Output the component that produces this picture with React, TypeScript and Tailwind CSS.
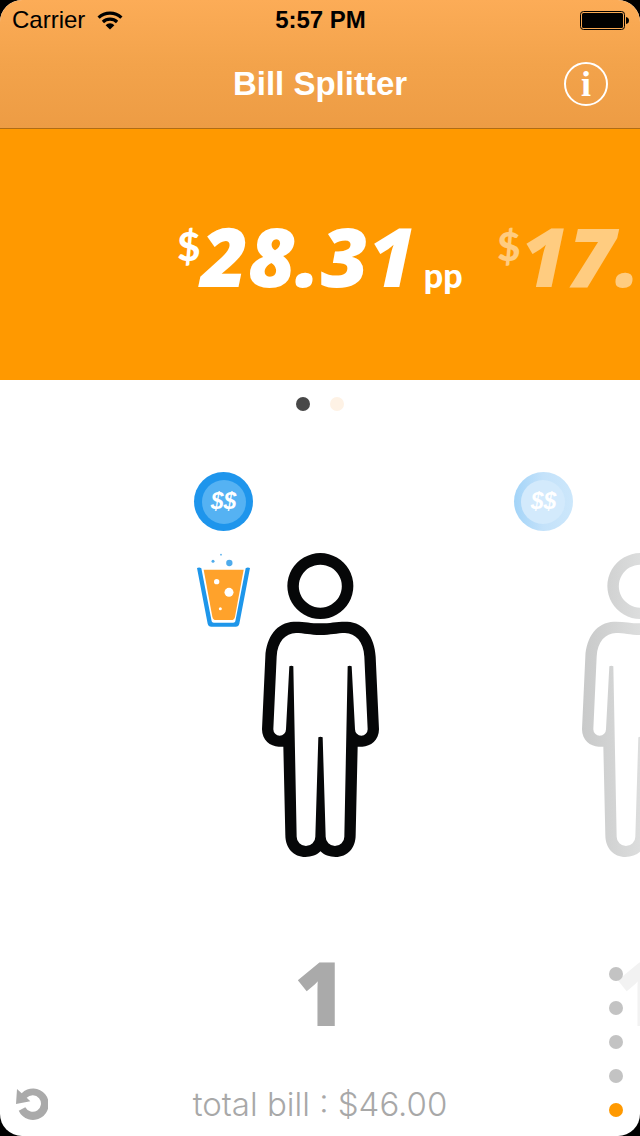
import React from "react";

type Option = {
  amount: string;
  people: number;
  drinks: boolean;
  active: boolean;
};

const options: Option[] = [
  { amount: "28.31", people: 1, drinks: true, active: true },
  { amount: "17.69", people: 1, drinks: false, active: false },
];

function WifiIcon() {
  return (
    <svg viewBox="0 0 26 19" className="h-[19px] w-[26px]" aria-hidden="true">
      <g fill="none" stroke="#000" strokeWidth="3.2">
        <path d="M1.6 6.6A16.5 16.5 0 0 1 24.4 6.6" />
        <path d="M5.9 11A10.3 10.3 0 0 1 20.1 11" />
      </g>
      <path d="M13 18.5L8.6 14.2A6.2 6.2 0 0 1 17.4 14.2Z" />
    </svg>
  );
}

function BatteryIcon() {
  return (
    <svg viewBox="0 0 49 19" className="h-[19px] w-[49px]" aria-hidden="true">
      <rect x="0.5" y="0.5" width="44" height="18" rx="3" fill="none" stroke="#000" />
      <rect x="2" y="2" width="41" height="15" rx="1.5" />
      <path d="M46 6Q49 6.5 49 9.5T46 13Z" />
    </svg>
  );
}

function PersonIcon({ active }: { active: boolean }) {
  return (
    <svg viewBox="35 39 351 912" className="h-[304px] w-[117px] shrink-0" aria-hidden="true">
      <defs>
        <linearGradient id="fade-person" gradientUnits="userSpaceOnUse" x1="35" y1="0" x2="386" y2="0">
          <stop offset="0" stopColor="#c8c9c9" />
          <stop offset="0.5" stopColor="#dcdddd" />
          <stop offset="1" stopColor="#eeeeee" />
        </linearGradient>
      </defs>
      <g fill={active ? "#060708" : "url(#fade-person)"} fillRule="evenodd">
        <path d="M210 39a99 99 0 1 0 .1 0ZM210 74a64.500 64.500 0 1 1-.1 0Z" />
        <path d="M210 250C180 250 160 244 130 245C80 247 48 290 45 350L35 568C35 600 60 620 85 620L99 620L105 885C105 925 130 951 165 951C183 951 200 945 210.500 934C221 945 238 951 256 951C291 951 316 925 316 885L322 620L336 620C361 620 386 600 386 568L376 350C373 290 341 247 291 245C261 244 241 250 210 250ZM210 285C180 285 160 279 137 279C105 280 81 305 79 350L69 568A19 19 0 0 0 107 568L117 379Q123 376 129 379L139 890A28 28 0 0 0 195 890L204 592Q210 588 217 592L226 890A28 28 0 0 0 282 890L292 379Q298 376 304 379L314 568A19 19 0 0 0 352 568L342 350C340 305 316 280 284 279C261 279 241 285 210 285Z" />
      </g>
    </svg>
  );
}

function DrinkIcon() {
  return (
    <svg viewBox="51 279 159 222" className="h-[74px] w-[53px]" aria-hidden="true">
      <path
        d="M51 324Q58 320 64 325L95 484Q96 488 101 488H160Q165 488 166 484L197 325Q203 320 210 324L178 491Q176 500 167 500H94Q85 500 83 491Z"
        fill="#1e96ea"
      />
      <path d="M71 329H191L165 470Q163 480 154 480H108Q99 480 97 470Z" fill="#ffa22b" />
      <g fill="#4fabeb">
        <circle cx="148" cy="309" r="9.5" />
        <circle cx="99" cy="304" r="4.500" />
        <circle cx="123" cy="284" r="2.500" />
      </g>
      <g fill="#fff">
        <circle cx="110" cy="365" r="8" />
        <circle cx="147" cy="397" r="13.500" />
        <circle cx="121" cy="446" r="4.500" />
      </g>
    </svg>
  );
}

function Coin({ active }: { active: boolean }) {
  const ring = active
    ? "bg-[#1e95ec]"
    : "bg-linear-to-r from-[#a3d4f8] via-[#c4e2fa] to-[#cce7fb]";
  const face = active ? "bg-[#55b2f3]" : "bg-[#d3eafc]";
  return (
    <span className={`flex size-[59px] items-center justify-center rounded-full ${ring}`}>
      <span
        className={`flex size-11 items-center justify-center rounded-full font-['Liberation_Sans'] text-[23px] leading-none font-bold text-white italic ${face}`}
      >
        $$
      </span>
    </span>
  );
}

function Amount({ option }: { option: Option }) {
  return (
    <div
      className={`flex w-2/3 shrink-0 items-start justify-center font-['Open_Sans',sans-serif] leading-none font-extrabold text-white ${
        option.active ? "" : "opacity-50"
      }`}
    >
      <span className="pt-3 font-['Lato',sans-serif] text-[40px] font-black">$</span>
      <span className="text-[82px] italic">{option.amount}</span>
      <span className="self-end pb-1 pl-2 font-['Lato',sans-serif] text-[34px] font-black">pp</span>
    </div>
  );
}

export default function App() {
  return (
    <div className="min-h-screen bg-black">
      <div className="relative flex min-h-screen flex-col overflow-hidden rounded-[22px] bg-white font-['Liberation_Sans',Arial,sans-serif]">
        <header className="border-b border-[#b06c14] bg-linear-to-b from-[#fcac57] via-[#f3a34b] to-[#ed9c44]">
          <div className="grid h-10 grid-cols-[1fr_auto_1fr] items-center pr-[11px] pl-3 text-2xl text-black">
            <div className="flex items-center gap-3">
              <span>Carrier</span>
              <WifiIcon />
            </div>
            <span className="font-bold">5:57 PM</span>
            <div className="flex justify-end">
              <BatteryIcon />
            </div>
          </div>
          <div className="grid h-22 grid-cols-[1fr_auto_1fr] items-center px-8">
            <h1 className="col-start-2 text-[33px] font-bold text-white">Bill Splitter</h1>
            <button
              type="button"
              aria-label="Information"
              className="flex size-11 items-center justify-center justify-self-end rounded-full border-2 border-white font-['Liberation_Serif',serif] text-4xl leading-none font-bold text-white"
            >
              i
            </button>
          </div>
        </header>

        <section className="flex h-[251px] items-center overflow-hidden bg-[#ff9900] pl-[25%]">
          {options.map((o) => (
            <Amount key={o.amount} option={o} />
          ))}
        </section>

        <main className="flex grow flex-col">
          <div className="flex justify-center gap-5 pt-[17px]">
            <span className="size-3.5 rounded-full bg-[#484848]" />
            <span className="size-3.5 rounded-full bg-[#fef2e5]" />
          </div>

          <div className="mt-[61px] flex overflow-hidden pl-[25%]">
            {options.map((o) => (
              <div key={o.amount} className="flex w-2/3 shrink-0 flex-col items-center">
                <div className="flex items-end gap-2 pr-[101px] pl-[34px]">
                  <div className="flex h-[385px] w-[60px] flex-col gap-[22px]">
                    <Coin active={o.active} />
                    {o.drinks && (
                      <div className="pl-[3px]">
                        <DrinkIcon />
                      </div>
                    )}
                  </div>
                  <PersonIcon active={o.active} />
                </div>
                <span
                  className={`mt-[75px] font-['Open_Sans',sans-serif] text-[88px] leading-[120px] font-extrabold ${
                    o.active ? "text-[#aaaaaa]" : "text-[#f2f2f2]"
                  }`}
                >
                  {o.people}
                </span>
              </div>
            ))}
          </div>

          <footer className="mt-auto grid grid-cols-[1fr_auto_1fr] items-center px-4 pb-2">
            <button type="button" aria-label="Reset" className="size-8">
              <svg viewBox="0 0 32 32" className="size-8" aria-hidden="true">
                <path
                  d="M2.700 22.700A15.700 15.700 0 1 0 5.700 5.300L1 1L0 16L14.300 13.300L10.700 9.700A8.300 8.300 0 1 1 9.300 19.300Z"
                  fill="#aaaaaa"
                />
              </svg>
            </button>
            <p className="font-['Inter',sans-serif] text-[33px] leading-12 font-light text-[#a8a8a8]">
              total bill : $46.00
            </p>
          </footer>
        </main>

        <div className="absolute right-[17px] bottom-[19px] flex flex-col gap-5">
          <span className="size-3.5 rounded-full bg-[#c3c3c3]" />
          <span className="size-3.5 rounded-full bg-[#c3c3c3]" />
          <span className="size-3.5 rounded-full bg-[#c3c3c3]" />
          <span className="size-3.5 rounded-full bg-[#c3c3c3]" />
          <span className="size-3.5 rounded-full bg-[#ff9900]" />
        </div>
      </div>
    </div>
  );
}
